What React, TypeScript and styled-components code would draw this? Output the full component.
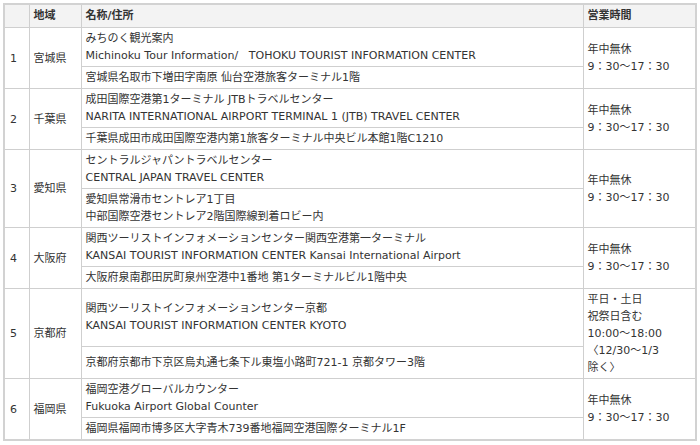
import React from "react";
import styled, { createGlobalStyle } from "styled-components";

const Global = createGlobalStyle`
  html, body { margin: 0; padding: 0; background: #fff; }
  body {
    font-family: "DejaVu Sans", "Noto Sans CJK JP", sans-serif;
    font-size: 11px;
    color: #333;
  }
`;

const Wrap = styled.div`
  padding: 3px 5px 0 3px;
`;

const Table = styled.table`
  border-collapse: collapse;
  width: 692px;
  border: 2px solid #d2d2d2;
  table-layout: fixed;
`;

const Col = styled.col<{ $w: number }>`
  width: ${(p) => p.$w}px;
`;

const Th = styled.th`
  box-sizing: border-box;
  background: #f3f3f3;
  border: 1px solid #cfcfcf;
  font-weight: bold;
  text-align: left;
  padding: 3px 4px;
  line-height: 16px;
  vertical-align: middle;
`;

const Td = styled.td`
  box-sizing: border-box;
  border: 1px solid #cfcfcf;
  padding: 2px 4px;
  line-height: 17px;
  vertical-align: middle;
  text-align: left;
  white-space: nowrap;
`;

const NumTd = styled(Td)`
  padding-left: 5px;
`;

const Line = styled.div``;

type Entry = {
  no: number;
  region: string;
  name: string[];
  addr: string[];
  hours: string[];
};

const std = ["年中無休", "9：30～17：30"];

const data: Entry[] = [
  {
    no: 1,
    region: "宮城県",
    name: ["みちのく観光案内", "Michinoku Tour Information/\u00a0\u00a0\u00a0TOHOKU TOURIST INFORMATION CENTER"],
    addr: ["宮城県名取市下増田字南原 仙台空港旅客ターミナル1階"],
    hours: std,
  },
  {
    no: 2,
    region: "千葉県",
    name: ["成田国際空港第1ターミナル JTBトラベルセンター", "NARITA INTERNATIONAL AIRPORT TERMINAL 1 (JTB) TRAVEL CENTER"],
    addr: ["千葉県成田市成田国際空港内第1旅客ターミナル中央ビル本館1階C1210"],
    hours: std,
  },
  {
    no: 3,
    region: "愛知県",
    name: ["セントラルジャパントラベルセンター", "CENTRAL JAPAN TRAVEL CENTER"],
    addr: ["愛知県常滑市セントレア1丁目", "中部国際空港セントレア2階国際線到着ロビー内"],
    hours: std,
  },
  {
    no: 4,
    region: "大阪府",
    name: ["関西ツーリストインフォメーションセンター関西空港第一ターミナル", "KANSAI TOURIST INFORMATION CENTER Kansai International Airport"],
    addr: ["大阪府泉南郡田尻町泉州空港中1番地 第1ターミナルビル1階中央"],
    hours: std,
  },
  {
    no: 5,
    region: "京都府",
    name: ["関西ツーリストインフォメーションセンター京都", "KANSAI TOURIST INFORMATION CENTER KYOTO"],
    addr: ["京都府京都市下京区烏丸通七条下ル東塩小路町721-1 京都タワー3階"],
    hours: ["平日・土日", "祝祭日含む", "10:00～18:00", "〈12/30～1/3", "除く〉"],
  },
  {
    no: 6,
    region: "福岡県",
    name: ["福岡空港グローバルカウンター", "Fukuoka Airport Global Counter"],
    addr: ["福岡県福岡市博多区大字青木739番地福岡空港国際ターミナル1F"],
    hours: std,
  },
];

const Lines = ({ items }: { items: string[] }) => (
  <>
    {items.map((t, i) => (
      <Line key={i}>{t}</Line>
    ))}
  </>
);

export default function App() {
  return (
    <>
      <Global />
      <Wrap>
        <Table>
          <colgroup>
            <Col $w={25} />
            <Col $w={52} />
            <Col $w={502} />
            <Col $w={113} />
          </colgroup>
          <thead>
            <tr>
              <Th></Th>
              <Th>地域</Th>
              <Th>名称/住所</Th>
              <Th>営業時間</Th>
            </tr>
          </thead>
          <tbody>
            {data.map((e) => (
              <React.Fragment key={e.no}>
                <tr>
                  <NumTd rowSpan={2}>{e.no}</NumTd>
                  <Td rowSpan={2}>{e.region}</Td>
                  <Td>
                    <Lines items={e.name} />
                  </Td>
                  <Td rowSpan={2}>
                    <Lines items={e.hours} />
                  </Td>
                </tr>
                <tr>
                  <Td>
                    <Lines items={e.addr} />
                  </Td>
                </tr>
              </React.Fragment>
            ))}
          </tbody>
        </Table>
      </Wrap>
    </>
  );
}
